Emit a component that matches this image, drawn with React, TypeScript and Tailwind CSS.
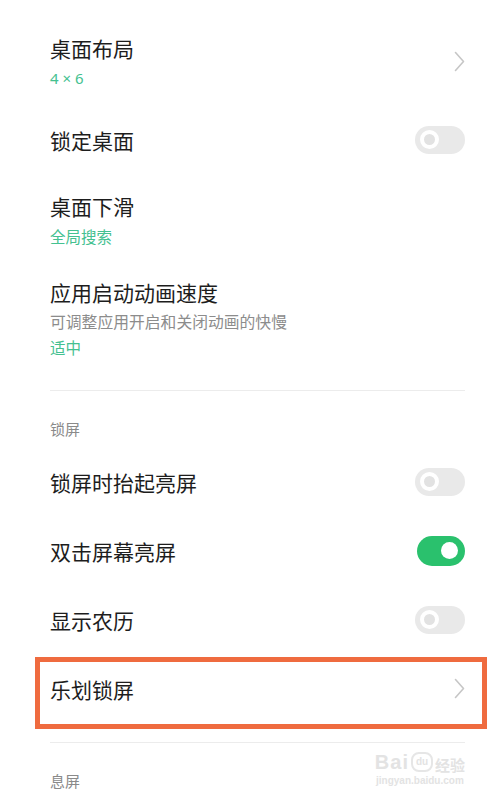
const cjk = "font-['Noto_Sans_CJK_SC','Noto_Sans',sans-serif]";

const Chevron = () => (
	<svg width="11" height="21" viewBox="0 0 11 21" fill="none" className="shrink-0">
		<polyline points="1.5,1.5 9.5,10.5 1.5,19.5" stroke="#c6c6c6" strokeWidth="1.6" strokeLinecap="round" strokeLinejoin="round" />
	</svg>
);

const Toggle = ({ on }: { on?: boolean }) =>
	on ? (
		<div className="w-[48px] h-[30px] rounded-full bg-[#2ac16d] flex items-center justify-end pr-[7px] shrink-0">
			<div className="w-[17px] h-[17px] rounded-full bg-white" />
		</div>
	) : (
		<div className="w-[50px] h-[28px] rounded-full bg-[#e9e9e9] flex items-center pl-[5px] shrink-0">
			<div className="w-[19px] h-[19px] rounded-full border-[4px] border-white bg-[#e2e2e2]" />
		</div>
	);

const Title = ({ children }: { children: React.ReactNode }) => (
	<div className="text-[21px] leading-[28px] text-[#1d1d1d]">{children}</div>
);

const Green = ({ children, mt }: { children: React.ReactNode; mt: string }) => (
	<div className={`text-[15.5px] leading-[22px] text-[#44c190] ${mt}`}>{children}</div>
);

export default function App() {
	return (
		<div className={`w-[493px] h-[796px] overflow-hidden bg-white ${cjk}`}>
			<div className="relative pl-[50px] pr-[28px] pt-[18px]">
				<div className="h-[87px] flex items-center justify-between">
					<div>
						<Title>桌面布局</Title>
						<div className="mt-[5px] text-[15px] leading-[22px] text-[#44c190] font-['Noto_Sans',sans-serif]">
							4 × 6
						</div>
					</div>
					<Chevron />
				</div>

				<div className="h-[69px] flex items-center justify-between">
					<Title>锁定桌面</Title>
					<Toggle />
				</div>

				<div className="h-[90px] flex items-center justify-between">
					<div>
						<Title>桌面下滑</Title>
						<Green mt="mt-[5px]">全局搜索</Green>
					</div>
				</div>

				<div className="h-[107px] flex items-center justify-between">
					<div>
						<Title>应用启动动画速度</Title>
						<div className="mt-[5px] text-[15.8px] leading-[22px] text-[#8c8c8c]">
							可调整应用开启和关闭动画的快慢
						</div>
						<Green mt="mt-[3px]">适中</Green>
					</div>
				</div>

				<div className="mt-[19px] border-t border-[#ececec]" />

				<div className="h-[56px] flex items-end pb-[7px] text-[15px] leading-[22px] text-[#8a8a8a]">
					锁屏
				</div>

				<div className="h-[69px] flex items-center justify-between">
					<Title>锁屏时抬起亮屏</Title>
					<Toggle />
				</div>
				<div className="h-[69px] flex items-center justify-between">
					<Title>双击屏幕亮屏</Title>
					<Toggle on />
				</div>
				<div className="h-[69px] flex items-center justify-between">
					<Title>显示农历</Title>
					<Toggle />
				</div>
				<div className="relative h-[69px] flex items-center justify-between">
					<Title>乐划锁屏</Title>
					<Chevron />
					<div className="absolute top-[3px] -bottom-[6px] -left-[15px] -right-[22px] border-[5px] border-[#ef6b3f] pointer-events-none" />
				</div>

				<div className="mt-[19px] border-t border-[#ececec]" />

				<div className="pt-[27px] text-[15px] leading-[22px] text-[#8a8a8a]">息屏</div>

				<div className="absolute right-[28px] top-[752px] flex flex-col items-center text-[#e3e3e3] pointer-events-none">
					<div className="flex items-end leading-none">
						<span className="font-['Liberation_Sans',sans-serif] text-[20px] font-bold tracking-[1px]">Bai</span>
						<span className="relative mx-[2px] w-[22px] h-[20px] rounded-[8px] border-[2px] border-[#e6e6e6] text-[10px] font-bold flex items-center justify-center font-['Liberation_Sans',sans-serif]">
							du
						</span>
						<span className="text-[15px] font-bold">经验</span>
					</div>
					<div className="mt-[4px] text-[10px] leading-none font-['Liberation_Sans',sans-serif] font-bold">
						jingyan.baidu.com
					</div>
				</div>
			</div>
		</div>
	);
}
